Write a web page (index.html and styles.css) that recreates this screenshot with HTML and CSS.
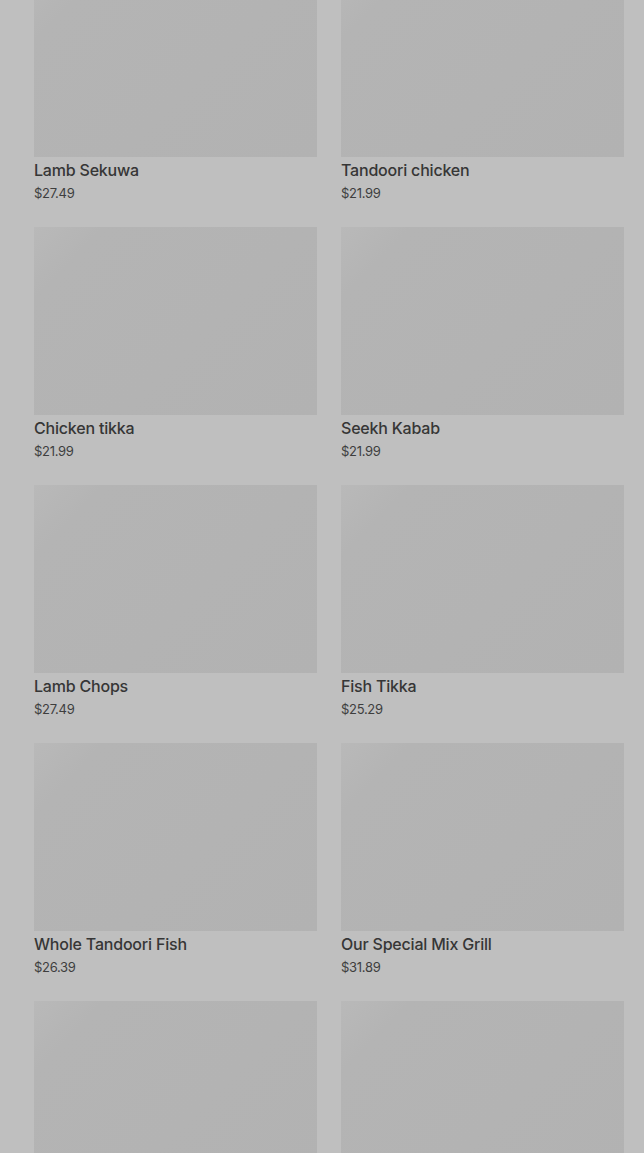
FILE: index.html
```html
<!DOCTYPE html>
<html>
<head>
    <meta charset="utf-8">
    <meta name="viewport" content="width=device-width, initial-scale=1.0">
    <title>Menu</title>
    <link rel="stylesheet" href="styles.css">
</head>
<body>
    <div id="menu-list">
        <div class="menu-item">
            <div class="item-image"></div>
            <div class="item-name">Lamb Sekuwa</div>
            <div class="item-price">$27.49</div>
        </div>
        <div class="menu-item">
            <div class="item-image"></div>
            <div class="item-name">Tandoori chicken</div>
            <div class="item-price">$21.99</div>
        </div>
        <div class="menu-item">
            <div class="item-image"></div>
            <div class="item-name">Chicken tikka</div>
            <div class="item-price">$21.99</div>
        </div>
        <div class="menu-item">
            <div class="item-image"></div>
            <div class="item-name">Seekh Kabab</div>
            <div class="item-price">$21.99</div>
        </div>
        <div class="menu-item">
            <div class="item-image"></div>
            <div class="item-name">Lamb Chops</div>
            <div class="item-price">$27.49</div>
        </div>
        <div class="menu-item">
            <div class="item-image"></div>
            <div class="item-name">Fish Tikka</div>
            <div class="item-price">$25.29</div>
        </div>
        <div class="menu-item">
            <div class="item-image"></div>
            <div class="item-name">Whole Tandoori Fish</div>
            <div class="item-price">$26.39</div>
        </div>
        <div class="menu-item">
            <div class="item-image"></div>
            <div class="item-name">Our Special Mix Grill</div>
            <div class="item-price">$31.89</div>
        </div>
        <div class="menu-item">
            <div class="item-image"></div>
        </div>
        <div class="menu-item">
            <div class="item-image"></div>
        </div>
    </div>
</body>
</html>
```

FILE: styles.css
```css
body {
    margin: 0;
    padding: 0;
    background: #bfbfbf;
    font-family: Inter, 'Noto Sans', sans-serif;
    color: #363636;
    overflow: hidden;
    height: 100vh;
}

#menu-list {
    display: grid;
    grid-template-columns: 283px 283px;
    column-gap: 24px;
    padding: 0 20px 0 34px;
    margin-top: -31px;
}

.menu-item {
    padding-bottom: 25px;
}

.item-image {
    height: 188px;
    background: linear-gradient(135deg, #b9b9b9 0, #b4b4b4 50px, #b2b2b2 100%);
}

.item-name {
    margin-top: 2px;
    font-size: 16px;
    line-height: 22px;
    font-weight: 500;
    letter-spacing: -0.2px;
}

.item-price {
    margin-top: 3px;
    font-size: 13px;
    line-height: 18px;
    letter-spacing: -0.3px;
    color: #3e3e3e;
}
```
